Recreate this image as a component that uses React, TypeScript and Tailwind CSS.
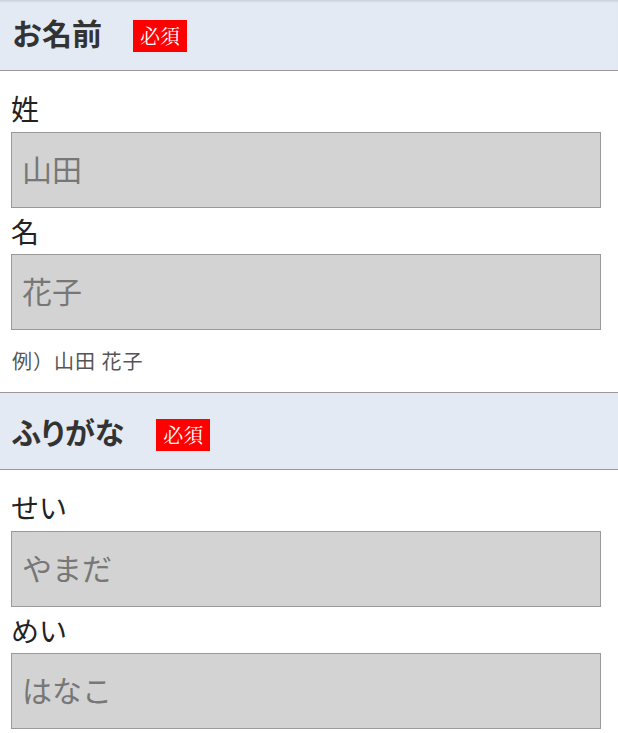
import React from "react";

const sans = '"Noto Sans CJK JP", "Noto Sans", sans-serif';

function Badge({ ml }: { ml: string }) {
  return (
    <span
      className={`inline-flex h-[32px] w-[54px] items-center justify-center bg-[#ff0000] text-[20px] leading-none text-white mt-[8px] ${ml}`}
      style={{ fontFamily: '"Noto Serif CJK JP", serif' }}
    >
      必須
    </span>
  );
}

function Field({ label, placeholder, first }: { label: string; placeholder: string; first?: boolean }) {
  return (
    <div className="flex flex-col">
      <div className={`px-[11px] text-[28px] text-[#222] ${first ? "pt-[14px] leading-[47px]" : "leading-[46px]"}`}>{label}</div>
      <div className="ml-[11px] mr-[17px]">
        <input
          readOnly
          placeholder={placeholder}
          className="box-border h-[76px] w-full border border-[#999] bg-[#d3d3d3] pl-[10px] pb-[5px] text-[30px] text-[#222] outline-none placeholder:text-[#777]"
          style={{ fontFamily: sans }}
        />
      </div>
    </div>
  );
}

export default function App() {
  return (
    <div className="h-[733px] w-[618px] overflow-hidden bg-white" style={{ fontFamily: sans }}>
      <div className="flex h-[71px] items-center border-b border-[#999] bg-[#e3eaf4] px-[12px] pb-[6px] shadow-[inset_0_3px_3px_-2px_rgba(0,0,0,0.15)]">
        <span className="text-[30px] font-bold leading-none text-[#333]">お名前</span>
        <Badge ml="ml-[31px]" />
      </div>
      <Field label="姓" placeholder="山田" first />
      <Field label="名" placeholder="花子" />
      <div className="mt-[16px] mb-[16px] px-[12px] text-[20px] leading-[30px] tracking-[1px] text-[#555]">例）山田 花子</div>
      <div className="flex h-[78px] items-center border-y border-[#999] bg-[#e3eaf4] px-[12px]">
        <span className="text-[30px] font-bold leading-none text-[#333]" style={{ fontFeatureSettings: '"palt"' }}>
          ふりがな
        </span>
        <Badge ml="ml-[32px]" />
      </div>
      <Field label="せい" placeholder="やまだ" first />
      <Field label="めい" placeholder="はなこ" />
    </div>
  );
}
